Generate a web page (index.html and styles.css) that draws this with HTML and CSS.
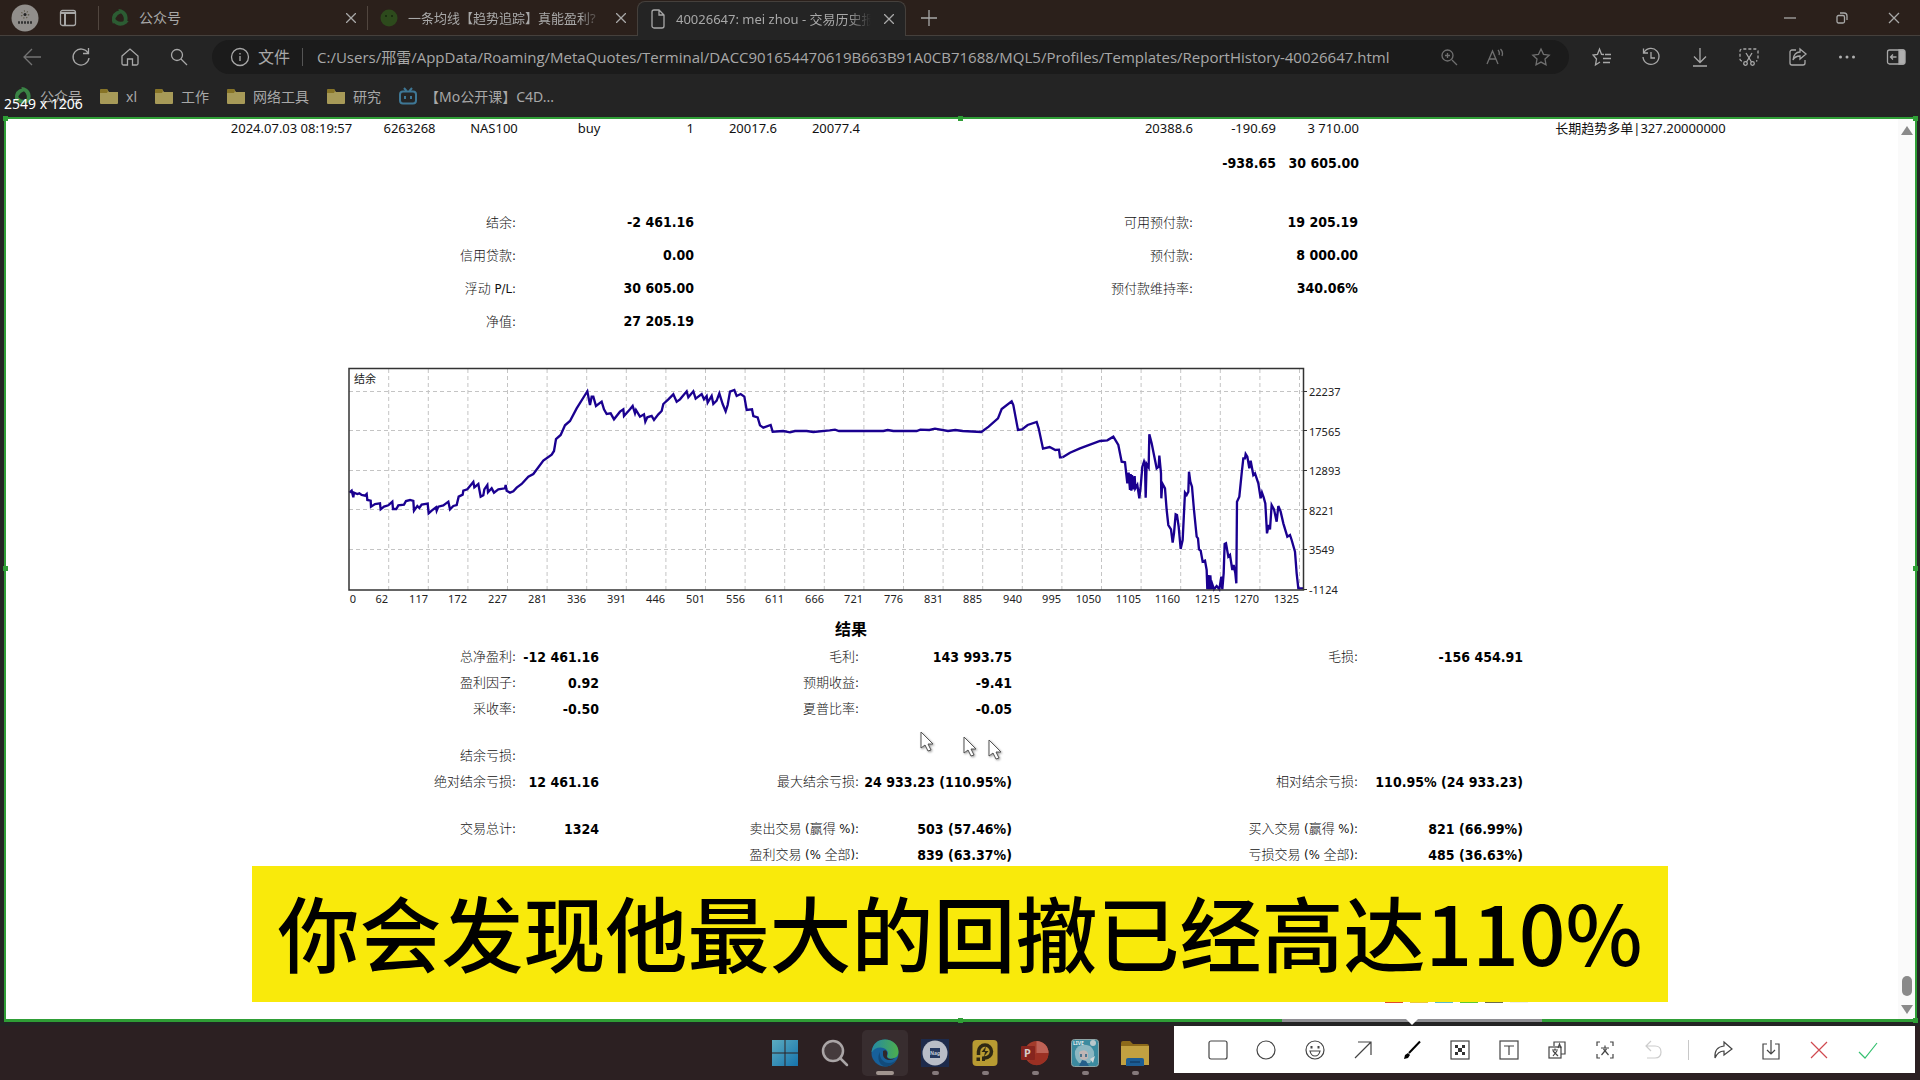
FILE: index.html
```html
<!DOCTYPE html>
<html lang="zh-CN">
    <head>
        <meta charset="utf-8" />
        <title>40026647: mei zhou - 交易历史报告</title>
        <link rel="stylesheet" href="styles.css">
    </head>

    <body>
        <header class="browser">
            <div class="tabstrip">
                <button class="avatar" aria-label="profile">
                    <svg width="28" height="28" viewBox="0 0 28 28"><circle cx="14" cy="14" r="13.500" fill="#918e8b"/><circle cx="14" cy="10.500" r="3.500" fill="none" stroke="#5a5645" stroke-width="1.500" stroke-dasharray="1 2"/><circle cx="14" cy="10.500" r="1.500" fill="#222"/><path d="M7 18.500h14" stroke="#333" stroke-width="2.500" stroke-dasharray="2 1"/></svg>
                </button>
                <button class="workspace" aria-label="tab actions">
                    <svg width="18" height="18" viewBox="0 0 18 18" class="line"><rect x="1.500" y="1.500" width="15" height="15" rx="2"/><path d="M2 4h14M6 5v11" stroke-width="2"/></svg>
                </button>
                <div class="tab first">
                    <svg width="18" height="18" viewBox="0 0 18 18" fill="#2c5c33"><g id="swirl"><path d="M1 12Q0 3 9 1L13 4Q5 4 4 12L2 15z"/><path d="M1 12Q0 3 9 1L13 4Q5 4 4 12L2 15z" transform="rotate(120 9 9)"/><path d="M1 12Q0 3 9 1L13 4Q5 4 4 12L2 15z" transform="rotate(240 9 9)"/></g></svg>
                    <span>公众号</span>
                    <button class="close" aria-label="close tab"><svg width="10" height="10" viewBox="0 0 10 10" class="line"><path d="M0 0l10 10M10 0L0 10"/></svg></button>
                </div>
                <div class="tab second">
                    <svg width="18" height="18" viewBox="0 0 18 18"><circle cx="9" cy="9" r="8.500" fill="#2d4a1c"/><circle cx="6" cy="7" r="1" fill="#15260d"/><circle cx="12" cy="7" r="1" fill="#15260d"/></svg>
                    <span class="fade">一条均线【趋势追踪】真能盈利?</span>
                    <button class="close" aria-label="close tab"><svg width="10" height="10" viewBox="0 0 10 10" class="line"><path d="M0 0l10 10M10 0L0 10"/></svg></button>
                </div>
                <div class="tab active">
                    <svg width="16" height="20" viewBox="0 0 16 20" class="line"><path d="M2 3a2 2 0 0 1 2-2h5l5 5v11a2 2 0 0 1-2 2H4a2 2 0 0 1-2-2zM9 1v5h5"/></svg>
                    <span class="fade">40026647: mei zhou - 交易历史报</span>
                    <button class="close" aria-label="close tab"><svg width="10" height="10" viewBox="0 0 10 10" class="line"><path d="M0 0l10 10M10 0L0 10"/></svg></button>
                </div>
                <button class="newtab" aria-label="new tab"><svg width="16" height="16" viewBox="0 0 16 16" class="line"><path d="M8 0v16M0 8h16"/></svg></button>
                <div class="window-buttons">
                    <button aria-label="minimize"><svg width="12" height="12" viewBox="0 0 12 12" class="line"><path d="M0 6h12"/></svg></button>
                    <button aria-label="restore"><svg width="12" height="12" viewBox="0 0 12 12" class="line"><rect x="1" y="3.500" width="7.500" height="7.500" rx="1.500"/><path d="M4 1h4a3 3 0 0 1 3 3v4"/></svg></button>
                    <button aria-label="close"><svg width="12" height="12" viewBox="0 0 12 12" class="line"><path d="M1 1l10 10M11 1L1 11"/></svg></button>
                </div>
            </div>

            <div class="toolbar">
                <button class="dim" aria-label="back"><svg width="20" height="20" viewBox="0 0 20 20" class="line"><path d="M19 10H2M10 2l-8 8 8 8"/></svg></button>
                <button aria-label="reload"><svg width="20" height="20" viewBox="0 0 20 20" class="line"><path d="M17 6a8 8 0 1 0 1 5M17.500 1v5.500H12"/></svg></button>
                <button aria-label="home"><svg width="20" height="20" viewBox="0 0 20 20" class="line"><path d="M2 9l8-7 8 7v7.500a1.500 1.500 0 0 1-1.500 1.500H12.500v-6h-5v6H3.500A1.500 1.500 0 0 1 2 16.500z"/></svg></button>
                <button aria-label="search"><svg width="20" height="20" viewBox="0 0 20 20" class="line"><circle cx="8" cy="8" r="5.500"/><path d="M12 12l6 6"/></svg></button>
                <div class="address">
                    <svg width="20" height="20" viewBox="0 0 20 20" class="line"><circle cx="10" cy="10" r="8.500"/><path d="M10 9v5M10 6v1.500"/></svg>
                    <label for="url">文件</label>
                    <input id="url" type="text" value="C:/Users/邢雷/AppData/Roaming/MetaQuotes/Terminal/DACC901654470619B663B91A0CB71688/MQL5/Profiles/Templates/ReportHistory-40026647.html">
                    <button class="dim" aria-label="zoom"><svg width="18" height="18" viewBox="0 0 18 18" class="line"><circle cx="7.500" cy="7.500" r="5.500"/><path d="M12 12l5 5M7.500 5v5M5 7.500h5"/></svg></button>
                    <button class="dim" aria-label="read aloud"><svg width="18" height="18" viewBox="0 0 18 18" class="line"><path d="M1 16L6.500 3 12 16M3 11h7M12 2q2 2 1 5M14.500 1q3 3 1.500 7"/></svg></button>
                    <button class="dim" aria-label="favorite"><svg width="20" height="20" viewBox="0 0 20 20" class="line"><path d="M10 2l2.500 5.300 5.700.8-4.200 4 1 5.700-5-2.700-5 2.700 1-5.700-4.200-4 5.700-.8z"/></svg></button>
                </div>
                <button aria-label="favorites"><svg width="20" height="20" viewBox="0 0 20 20" class="line"><path d="M12 7.500L9.500 7.300 7.500 2 5.500 7.300 1 8l3.500 4-1 6L8 15M13 7.500h6M11 11.500h8M11 15.500h7"/></svg></button>
                <button aria-label="history"><svg width="20" height="20" viewBox="0 0 20 20" class="line"><path d="M3 5.500A8 8 0 1 1 2 10M2.500 1.500v4.500H7M10 5v6h4"/></svg></button>
                <button aria-label="downloads"><svg width="20" height="20" viewBox="0 0 20 20" class="line"><path d="M10 1v14M4 9.500l6 6 6-6M3 19h14"/></svg></button>
                <button aria-label="web capture"><svg width="20" height="20" viewBox="0 0 20 20" class="line"><path d="M3 14a2 2 0 0 1-2-2V4a2 2 0 0 1 2-2h14a2 2 0 0 1 2 2v8a2 2 0 0 1-2 2" stroke-dasharray="3 2"/><path d="M7 6l5.500 9M13 6l-5.500 9"/><circle cx="6.500" cy="16.500" r="1.800"/><circle cx="13.500" cy="16.500" r="1.800"/></svg></button>
                <button aria-label="share"><svg width="20" height="20" viewBox="0 0 20 20" class="line"><path d="M8 3H4a2 2 0 0 0-2 2v11a2 2 0 0 0 2 2h11a2 2 0 0 0 2-2v-3M12 2l6 5-6 5V9q-5 0-7 4 1-8 7-8z"/></svg></button>
                <button aria-label="more"><svg width="20" height="20" viewBox="0 0 20 20" fill="#b0b0b0"><circle cx="3.500" cy="10" r="1.500"/><circle cx="10" cy="10" r="1.500"/><circle cx="16.500" cy="10" r="1.500"/></svg></button>
                <button aria-label="sidebar"><svg width="20" height="20" viewBox="0 0 20 20" class="line"><rect x="1.500" y="3" width="17" height="14" rx="2"/><path d="M13 3h4a2 2 0 0 1 2 2v10a2 2 0 0 1-2 2h-4z" fill="#b0b0b0"/><path d="M10.500 10h-6M7 7.500L4.500 10 7 12.500"/></svg></button>
            </div>

            <nav class="bookmarks">
                <a href="#"><svg width="18" height="18" viewBox="0 0 18 18" fill="#3a8445"><use href="#swirl"/></svg>公众号</a>
                <a href="#"><svg width="18" height="18" viewBox="0 0 18 18"><path d="M0 3.500A1.500 1.500 0 0 1 1.500 2H7l2 3h9v11a1 1 0 0 1-1 1H1a1 1 0 0 1-1-1z" fill="#a79a58"/><path d="M0 3.500A1.500 1.500 0 0 1 1.500 2H7l1 2-1 2H0z" fill="#877426"/></svg>xl</a>
                <a href="#"><svg width="18" height="18" viewBox="0 0 18 18"><path d="M0 3.500A1.500 1.500 0 0 1 1.500 2H7l2 3h9v11a1 1 0 0 1-1 1H1a1 1 0 0 1-1-1z" fill="#a79a58"/><path d="M0 3.500A1.500 1.500 0 0 1 1.500 2H7l1 2-1 2H0z" fill="#877426"/></svg>工作</a>
                <a href="#"><svg width="18" height="18" viewBox="0 0 18 18"><path d="M0 3.500A1.500 1.500 0 0 1 1.500 2H7l2 3h9v11a1 1 0 0 1-1 1H1a1 1 0 0 1-1-1z" fill="#a79a58"/><path d="M0 3.500A1.500 1.500 0 0 1 1.500 2H7l1 2-1 2H0z" fill="#877426"/></svg>网络工具</a>
                <a href="#"><svg width="18" height="18" viewBox="0 0 18 18"><path d="M0 3.500A1.500 1.500 0 0 1 1.500 2H7l2 3h9v11a1 1 0 0 1-1 1H1a1 1 0 0 1-1-1z" fill="#a79a58"/><path d="M0 3.500A1.500 1.500 0 0 1 1.500 2H7l1 2-1 2H0z" fill="#877426"/></svg>研究</a>
                <a href="#"><svg width="18" height="18" viewBox="0 0 18 18" fill="none" stroke="#3e7795" stroke-width="2"><rect x="1" y="4.500" width="16" height="12" rx="3"/><path d="M5 1l2.500 3M13 1l-2.500 3M6 9v3M12 9v3"/></svg>【Mo公开课】C4D...</a>
            </nav>
            <div class="size-tip">2549 x 1206</div>
        </header>

        <div class="capture">
            <main class="report">
                <table class="deals">
                    <colgroup><col class="w144"><col class="w92"><col class="w77"><col class="w113"><col class="w50"><col class="w83"><col class="w83"><col class="w250"><col class="w83"><col class="w83"><col class="w83"><col class="w160"><col></colgroup>
                    <tr>
                        <td>2024.07.03 08:19:57</td><td>6263268</td><td>NAS100</td><td>buy</td>
                        <td class="num">1</td><td class="num">20017.6</td><td class="num">20077.4</td><td></td>
                        <td class="num">20388.6</td><td class="num">-190.69</td><td class="num">3 710.00</td><td></td>
                        <td>长期趋势多单|327.20000000</td>
                    </tr>
                    <tr class="totals">
                        <td colspan="9"></td><td class="num"><b>-938.65</b></td><td class="num"><b>30 605.00</b></td><td colspan="2"></td>
                    </tr>
                </table>

                <table class="balance">
                    <colgroup><col class="w298"><col class="w178"><col class="w499"><col class="w165"><col></colgroup>
                    <tr><td>结余:</td><td><b>-2 461.16</b></td><td>可用预付款:</td><td><b>19 205.19</b></td><td></td></tr>
                    <tr><td>信用贷款:</td><td><b>0.00</b></td><td>预付款:</td><td><b>8 000.00</b></td><td></td></tr>
                    <tr><td>浮动 P/L:</td><td><b>30 605.00</b></td><td>预付款维持率:</td><td><b>340.06%</b></td><td></td></tr>
                    <tr><td>净值:</td><td><b>27 205.19</b></td><td></td><td></td><td></td></tr>
                </table>

                <svg class="chart" width="1010" height="248" viewBox="340 362 1010 248">
                    <!-- grid -->
                    <path class="grid" d="M349 391.500H1303M349 430.500H1303M349 470.500H1303M349 509.500H1303M349 549.500H1303"/>
                    <path class="grid" d="M388.700 369v221M428.300 369v221M467.900 369v221M507.500 369v221M547.100 369v221M586.700 369v221M626.300 369v221M665.900 369v221M705.500 369v221M745.100 369v221M784.700 369v221M824.300 369v221M863.900 369v221M903.500 369v221M943.100 369v221M982.700 369v221M1022.300 369v221M1061.900 369v221M1101.500 369v221M1141.100 369v221M1180.700 369v221M1220.300 369v221M1259.900 369v221M1299.500 369v221"/>
                    <!-- balance curve -->
                    <g class="curve" transform="translate(330 350) scale(.33333)">
                        <polyline points="58,428 65,422 70,442 72,428 82,432 88,430 95,435 105,437 110,432 112,450 122,452 123,470 135,462 150,460 152,478 162,470 175,466 187,455 189,477 199,477 205,466 222,464 228,453 240,450 250,453 252,482 262,468 268,474 275,464 293,461 296,490 305,482 318,472 320,482 325,470 340,466 355,455 360,478 370,468 380,465 386,440 398,434 400,422 412,418 430,396 433,412 445,402 452,440 460,436 463,418 472,405 474,427 485,415 492,428 505,418 525,415 527,405 530,422 540,428 550,424 560,413 575,402 595,380 610,372 640,332 665,314 672,303 678,267 692,255 705,226 720,213 740,175 765,135 772,124 780,165 785,140 790,140 798,168 815,155 822,178 830,192 842,190 852,208 870,185 880,178 882,198 900,178 908,168 915,190 918,180 930,200 942,193 946,215 952,202 965,198 972,210 985,193 995,183 1000,162 1015,148 1030,133 1040,155 1050,148 1070,124 1075,142 1090,124 1097,146 1115,132 1122,148 1130,138 1133,158 1145,138 1150,162 1160,152 1168,130 1178,162 1187,184 1193,165 1200,125 1213,120 1220,138 1232,132 1243,140 1250,180 1266,178 1270,198 1283,202 1290,226 1300,233 1322,225 1328,245 1360,243 1380,247 1395,243 1430,243 1450,246 1499,241 1515,239 1527,243 1660,243 1673,240 1690,243 1760,243 1771,239 1798,240 1815,236 1854,243 1876,240 1898,243 1954,246 1976,230 2004,205 2015,177 2045,154 2050,165 2064,240 2076,238 2093,225 2120,216 2126,235 2139,296 2159,291 2176,300 2187,299 2190,322 2198,322"/>
                        <polyline transform="translate(2160 -30)" points="38,352 60,338 90,325 150,303 172,301 190,290 205,315 215,365 225,367 232,430 236,398 240,450 242,402 244,452 246,405 250,448 254,408 256,445 262,435 268,475 272,440 277,380 282,365 285,375 287,473 290,372 296,382 298,283 305,310 312,345 320,385 326,380 328,347 333,400 334,475 337,430 345,445 350,510 355,555 363,568 368,608 372,580 377,523 381,525 386,560 392,627 398,600 405,458 410,465 415,455 417,395 421,425 426,440 432,510 440,590 444,595 447,628 452,632 458,665 465,662 470,690 472,748 475,705 478,748 481,706 484,748 487,733 492,748 500,738 508,748 514,710 517,748 521,700 524,612 528,610 535,650 540,645 547,690 551,675 556,700 559,730 561,485 568,470 575,400 580,355 585,355 587,342 592,350 598,385 602,362 610,405 615,400 625,430 632,475 636,458 641,472 646,490 651,580 656,555 660,568 665,495 672,508 680,545 685,498 692,515 700,550 712,590 720,585 725,600 735,635 740,700 745,745 760,745"/>
                    </g>
                    <rect class="plot" x="349" y="368.500" width="954.500" height="221.500"/>
                    <path class="ticks" d="M1303 391.500h4M1303 430.500h4M1303 470.500h4M1303 509.500h4M1303 549.500h4M1303 589.500h4"/>
                    <text x="354" y="383">结余</text>
                    <g class="xaxis">
                        <text x="356" y="603">0</text><text x="388" y="603">62</text><text x="428" y="603">117</text><text x="467" y="603">172</text><text x="507" y="603">227</text><text x="547" y="603">281</text><text x="586" y="603">336</text><text x="626" y="603">391</text><text x="665" y="603">446</text><text x="705" y="603">501</text><text x="745" y="603">556</text><text x="784" y="603">611</text><text x="824" y="603">666</text><text x="863" y="603">721</text><text x="903" y="603">776</text><text x="943" y="603">831</text><text x="982" y="603">885</text><text x="1022" y="603">940</text><text x="1061" y="603">995</text><text x="1101" y="603">1050</text><text x="1141" y="603">1105</text><text x="1180" y="603">1160</text><text x="1220" y="603">1215</text><text x="1259" y="603">1270</text><text x="1299" y="603">1325</text>
                    </g>
                    <text x="1309" y="396">22237</text><text x="1309" y="436">17565</text><text x="1309" y="475">12893</text><text x="1309" y="515">8221</text><text x="1309" y="554">3549</text><text x="1309" y="594">-1124</text>
                </svg>

                <table class="results">
                    <caption>结果</caption>
                    <colgroup><col class="w298"><col class="w83"><col class="w260"><col class="w153"><col class="w346"><col class="w165"><col></colgroup>
                    <tr><td>总净盈利:</td><td><b>-12 461.16</b></td><td>毛利:</td><td><b>143 993.75</b></td><td>毛损:</td><td><b>-156 454.91</b></td><td></td></tr>
                    <tr><td>盈利因子:</td><td><b>0.92</b></td><td>预期收益:</td><td><b>-9.41</b></td><td></td><td></td><td></td></tr>
                    <tr><td>采收率:</td><td><b>-0.50</b></td><td>夏普比率:</td><td><b>-0.05</b></td><td></td><td></td><td></td></tr>
                    <tr class="spacer"><td colspan="7"></td></tr>
                    <tr><td>结余亏损:</td><td></td><td></td><td></td><td></td><td></td><td></td></tr>
                    <tr><td>绝对结余亏损:</td><td><b>12 461.16</b></td><td>最大结余亏损:</td><td><b>24 933.23 (110.95%)</b></td><td>相对结余亏损:</td><td><b>110.95% (24 933.23)</b></td><td></td></tr>
                    <tr class="spacer"><td colspan="7"></td></tr>
                    <tr><td>交易总计:</td><td><b>1324</b></td><td>卖出交易 (赢得 %):</td><td><b>503 (57.46%)</b></td><td>买入交易 (赢得 %):</td><td><b>821 (66.99%)</b></td><td></td></tr>
                    <tr><td></td><td></td><td>盈利交易 (% 全部):</td><td><b>839 (63.37%)</b></td><td>亏损交易 (% 全部):</td><td><b>485 (36.63%)</b></td><td></td></tr>
                </table>
            </main>
            <div class="scrollbar">
                <i class="up"></i>
                <i class="thumb"></i>
                <i class="down"></i>
            </div>
            <i class="handle tl"></i><i class="handle tc"></i><i class="handle tr"></i>
            <i class="handle ml"></i><i class="handle mr"></i>
            <i class="handle bc"></i><i class="handle br"></i>
            <div class="palette"><i class="red"></i><i class="yellow"></i><i class="blue"></i><i class="green"></i><i class="dark"></i><i class="light"></i></div>
        </div>

        <footer class="taskbar">
            <div class="apps">
                <button aria-label="start"><svg width="28" height="28" viewBox="0 0 28 28"><defs><linearGradient id="win" x1="0" y1="0" x2="1" y2="1"><stop offset="0" stop-color="#5cacc0"/><stop offset="1" stop-color="#1673ac"/></linearGradient></defs><path d="M1 1h12.500v12.500H1zM14.500 1H27v12.500H14.500zM1 14.500h12.500V27H1zM14.500 14.500H27V27H14.500z" fill="url(#win)"/></svg></button>
                <button aria-label="search"><svg width="28" height="28" viewBox="0 0 28 28" fill="#453b3d" stroke="#aaa5a6" stroke-width="2.500"><circle cx="12" cy="12" r="10"/><path d="M19 19l7 7" stroke-linecap="round"/></svg></button>
                <button class="current" aria-label="edge"><svg width="28" height="28" viewBox="0 0 28 28"><defs><linearGradient id="edge"><stop offset="0" stop-color="#2489a5"/><stop offset="1" stop-color="#4dae4c"/></linearGradient></defs><circle cx="14" cy="14" r="13.500" fill="#17609a"/><path d="M.5 13C2 4 7 .5 14 .5c8 0 13.500 6 13.500 12 0 5-3 7-7 7-3 0-5-1-4-3 2-4-2-8-7-8-4 0-7 2-8.500 4.500z" fill="url(#edge)"/><path d="M9 13c-1 6 3 11 9 11 3 0 5-1 7-3-3 5-7 6.500-11 6.500-5-1-9-8-5-14.500z" fill="#124b7a"/><path d="M12 12c3-2 5 1 4 4-1 4 4 5 8 3-3 3-11 3-12-3z" fill="#30272a"/></svg></button>
                <button class="open" aria-label="nag"><svg width="28" height="28" viewBox="0 0 28 28"><path fill="#1d2a4b" d="M0 0h28v28H0z"/><circle cx="14" cy="14" r="12.500" fill="#b9bdc7"/><path fill="#26385f" d="M9 9h10v10H9z"/><text x="9" y="16" font-size="5" fill="#c2c8d4" font-weight="bold">Nag</text></svg></button>
                <button class="open" aria-label="potplayer"><svg width="28" height="28" viewBox="0 0 28 28"><rect x="1.500" y="1" width="25" height="26" rx="4" fill="#b89b32"/><path d="M7.500 16V12.500a6.500 6.500 0 1 1 6.500 6.500h-1.500" fill="none" stroke="#2e2814" stroke-width="3.500"/><path d="M5.500 18.500h3.500v3.500H5.500zM11 17.500h3v4.500h-3z" fill="#2e2814"/><path d="M15 7.500l-4.500 5.500h3.500l-1 4.500 4.500-5.500h-3.500z" fill="#2e2814"/></svg></button>
                <button class="open" aria-label="powerpoint"><svg width="28" height="28" viewBox="0 0 28 28"><circle cx="15.500" cy="14" r="12" fill="#a33b2b"/><path d="M15.500 2a12 12 0 0 1 12 12h-12z" fill="#bd6256"/><path d="M15.500 14h12a12 12 0 0 1-20 9z" fill="#9b3023"/><rect x="0" y="7" width="14" height="14" rx="1" fill="#86251e"/><text x="3" y="18" font-size="11" font-weight="bold" fill="#d7cdca">P</text></svg></button>
                <button class="open" aria-label="live"><svg width="28" height="28" viewBox="0 0 28 28"><rect x=".5" y=".5" width="27" height="27" rx="3" fill="#3b8a9f" stroke="#8fa4a6"/><path d="M4 12q4-9 15-5 5 4 4 10l-4 7H8q-5-5-4-12z" fill="#8cb7c2"/><path d="M8 13q6-4 9 1v5q-4 4-8 0z" fill="#c0b5b5"/><path d="M10 15v3M15 15v3" stroke="#255f80" stroke-width="1.500"/><path d="M8 27l3-6 4 1 3 5z" fill="#245f8b"/><circle cx="22" cy="4" r="3" fill="#b8c7cc"/><path d="M19 20l5-3-2 7z" fill="#d0d7d8"/><text x="2" y="6" font-size="5" font-weight="bold" fill="#e0eaec">LIVE</text></svg></button>
                <button class="open" aria-label="explorer"><svg width="28" height="28" viewBox="0 0 28 28"><path d="M0 4a2 2 0 0 1 2-2h7l3 3h14a2 2 0 0 1 2 2v19H0z" fill="#8c6a1b"/><path d="M0 7h28v19H0z" fill="#c2a141"/><path d="M5 27v-6a2 2 0 0 1 2-2h14a2 2 0 0 1 2 2v6z" fill="#1c5d94"/><path d="M9 23h10" stroke="#123f6a" stroke-width="1.500"/></svg></button>
            </div>
            <div class="snip">
                <button aria-label="rectangle"><svg width="20" height="20" viewBox="0 0 20 20"><rect x="1" y="1" width="18" height="18" rx="2"/></svg></button>
                <button aria-label="ellipse"><svg width="20" height="20" viewBox="0 0 20 20"><circle cx="10" cy="10" r="9"/></svg></button>
                <button aria-label="emoji"><svg width="20" height="20" viewBox="0 0 20 20"><circle cx="10" cy="10" r="9"/><path d="M5 11h10q-1 5-5 5t-5-5z"/><path d="M6.500 6v2.500M13.500 6v2.500" stroke-width="2"/></svg></button>
                <button aria-label="arrow"><svg width="20" height="20" viewBox="0 0 20 20"><path d="M2 18L18 2M5 2h13v13"/></svg></button>
                <button class="selected" aria-label="brush"><svg width="20" height="20" viewBox="0 0 20 20"><path d="M7 13L18 1.500" stroke="#000" stroke-width="2"/><path d="M2 19l1-4 3-2 2 2-2 3z" fill="#000" stroke="none"/></svg></button>
                <button aria-label="mosaic"><svg width="20" height="20" viewBox="0 0 20 20"><rect x="1" y="1" width="18" height="18"/><path d="M5 5h3v3H5zM12 5h3v3h-3zM8 8h4v4H8zM5 12h3v3H5zM12 12h3v3h-3z" fill="#333" stroke="none"/></svg></button>
                <button aria-label="text"><svg width="20" height="20" viewBox="0 0 20 20"><rect x="1" y="1" width="18" height="18"/><path d="M5 6h10M10 6v9"/></svg></button>
                <button aria-label="translate"><svg width="20" height="20" viewBox="0 0 20 20"><path d="M7 6V2h11v12h-4"/><rect x="2" y="7" width="12" height="11"/><path d="M5 10h6M8 8.500V10M6 16l4-5M6 11l5 5M11 8l1.500-4L14 8"/></svg></button>
                <button aria-label="recognize text"><svg width="20" height="20" viewBox="0 0 20 20"><path d="M5 2H2v4M15 2h3v4M5 18H2v-4M15 18h3v-4M6 8h8M10 5.500v2.500M6.500 15l5-6M8.500 9l5 6"/></svg></button>
                <button class="off" aria-label="undo"><svg width="20" height="20" viewBox="0 0 20 20"><path d="M7 1L2 6l5 5M2 6h9q6 0 6 6t-6 6H3"/></svg></button>
                <hr>
                <button aria-label="share"><svg width="20" height="20" viewBox="0 0 20 20"><path d="M11 2l8 7-8 6v-4q-6 0-9 7-1-11 9-12z"/></svg></button>
                <button aria-label="save"><svg width="20" height="20" viewBox="0 0 20 20"><path d="M6 4H2v15h16V4h-4M10 0v14M6 10l4 4 4-4"/></svg></button>
                <button class="cancel" aria-label="cancel"><svg width="20" height="20" viewBox="0 0 20 20"><path d="M2 2l16 16M18 2L2 18"/></svg></button>
                <button class="ok" aria-label="done"><svg width="20" height="20" viewBox="0 0 20 20"><path d="M1 12l6 6L19 3"/></svg></button>
            </div>
        </footer>

        <svg class="cursor one" width="16" height="23" viewBox="0 0 16 23"><path d="M1 1v16l4-3 3 6 3-1-3-6h5z"/></svg>
        <svg class="cursor two" width="16" height="23" viewBox="0 0 16 23"><path d="M1 1v16l4-3 3 6 3-1-3-6h5z"/></svg>
        <svg class="cursor three" width="16" height="23" viewBox="0 0 16 23"><path d="M1 1v16l4-3 3 6 3-1-3-6h5z"/></svg>

        <div class="subtitle">你会发现他最大的回撤已经高达110%</div>
    </body>
</html>
```

FILE: styles.css
```css
* {
    box-sizing: border-box;
}
html, body {
    margin: 0;
    padding: 0;
    height: 100%;
    overflow: hidden;
}
body {
    position: relative;
    display: flex;
    flex-direction: column;
    background: #242424;
    font-family: "Noto Sans", "Noto Sans CJK SC", sans-serif;
}
button {
    display: flex;
    align-items: center;
    justify-content: center;
    padding: 0;
    border: 0;
    background: none;
    color: inherit;
    font: inherit;
}
svg {
    flex: none;
}
.line {
    fill: none;
    stroke: #a8a8a8;
    stroke-width: 1.3;
}
.dim {
    opacity: 0.6;
}

/* browser top */
.browser {
    position: relative;
    flex: none;
    height: 117px;
    color: #a8a8a8;
    font-size: 14px;
}
.tabstrip {
    display: flex;
    align-items: center;
    height: 36px;
    background: #2b201b;
    border-bottom: 1px solid #45403c;
}
.avatar {
    width: 50px;
}
.workspace {
    width: 36px;
}
.tab {
    display: flex;
    align-items: center;
    height: 24px;
    gap: 10px;
    padding: 0 8px 0 12px;
    border-left: 1px solid #51463f;
}
.tab span {
    flex: 1;
    overflow: hidden;
    white-space: nowrap;
    line-height: 20px;
}
.tab .fade {
    font-size: 13px;
    mask-image: linear-gradient(to right, #000 88%, transparent);
}
.first {
    width: 269px;
    margin-left: 12px;
}
.second {
    width: 270px;
    padding-right: 8px;
}
.active {
    align-self: flex-end;
    width: 269px;
    height: 35px;
    margin-bottom: -1px;
    background: #242424;
    border: 1px solid #45403c;
    border-bottom: 0;
    border-radius: 8px 8px 0 0;
}
.close {
    width: 16px;
}
.newtab {
    width: 46px;
}
.window-buttons {
    display: flex;
    margin-left: auto;
}
.window-buttons button {
    width: 52px;
}
.toolbar {
    display: flex;
    align-items: center;
    height: 41px;
    padding: 0 0 0 7px;
}
.toolbar > button {
    width: 49px;
}
.address {
    flex: 1;
    display: flex;
    align-items: center;
    height: 34px;
    margin: 0 8px 0 9px;
    padding: 0 5px 0 18px;
    background: #1b1b1b;
    border-radius: 17px;
}
.address label {
    margin: 0 14px 0 8px;
    padding-right: 12px;
    border-right: 1px solid #555;
    font-size: 16px;
    line-height: 18px;
}
.address input {
    flex: 1;
    min-width: 0;
    padding: 0;
    border: 0;
    outline: 0;
    background: none;
    color: #a8a8a8;
    font: 15px "Open Sans", "Noto Sans CJK SC", sans-serif;
}
.address button {
    width: 46px;
}
.bookmarks {
    display: flex;
    align-items: center;
    gap: 18px;
    height: 38px;
    padding-left: 14px;
}
.bookmarks a {
    display: flex;
    align-items: center;
    gap: 8px;
    color: #a8a8a8;
    text-decoration: none;
}
.size-tip {
    position: absolute;
    left: 4px;
    top: 94px;
    color: #fff;
    font-size: 14px;
    line-height: 20px;
}

/* captured page */
.capture {
    position: relative;
    flex: 1;
    display: flex;
    min-height: 0;
    margin: 0 3px 0 4px;
    border: 2px solid #2f9e36;
    border-bottom-width: 3px;
    background: #fff;
}
.report {
    flex: 1;
    min-width: 0;
    overflow: hidden;
    padding: 0 136px 0 215px;
    color: #000;
}
table {
    width: 100%;
    table-layout: fixed;
    border-collapse: collapse;
    font-size: 13px;
}
td {
    height: 18px;
    padding: 0 3px 0 0;
    color: #111;
    line-height: 18px;
    text-align: center;
    white-space: nowrap;
}
td b {
    color: #000;
    font-family: "DejaVu Sans Condensed", "Noto Sans", sans-serif;
    font-size: 14px;
    font-weight: 700;
}
.num, .balance td, .results td {
    text-align: right;
}
.totals td {
    height: 52px;
}
.balance {
    margin-top: 17px;
}
.balance td {
    height: 33px;
}
.balance td, .results td {
    font-family: "DejaVu Sans Condensed", "Noto Sans CJK SC", sans-serif;
    font-weight: 300;
}
.results caption {
    height: 34px;
    padding: 2px 281px 0 0;
    font-size: 16px;
    font-weight: bold;
    line-height: 34px;
}
.results td {
    height: 26px;
}
.results .spacer td {
    height: 21px;
}
.w50 { width: 50px; }
.w77 { width: 77px; }
.w83 { width: 83px; }
.w92 { width: 92px; }
.w113 { width: 113px; }
.w144 { width: 144px; }
.w153 { width: 153px; }
.w160 { width: 160px; }
.w165 { width: 165px; }
.w178 { width: 178px; }
.w250 { width: 250px; }
.w260 { width: 260px; }
.w298 { width: 298px; }
.w346 { width: 346px; }
.w499 { width: 499px; }

.chart {
    display: block;
    margin: 24px 0 0 119px;
    font-size: 11px;
    fill: #222;
}
.grid {
    fill: none;
    stroke: #c4c4c4;
    stroke-dasharray: 4 3;
}
.curve {
    fill: none;
    stroke: #1a0090;
    stroke-width: 7;
}
.plot {
    fill: none;
    stroke: #333;
    stroke-width: 1.5;
}
.ticks {
    stroke: #333;
}
.xaxis text {
    text-anchor: end;
}

.scrollbar {
    display: flex;
    flex-direction: column;
    align-items: center;
    width: 17px;
    padding: 7px 0 5px;
    background: #fafafa;
}
.up, .down {
    border: 6px solid transparent;
}
.up {
    border-top: 0;
    border-bottom: 9px solid #8a8a8a;
}
.down {
    border-bottom: 0;
    border-top: 9px solid #8a8a8a;
}
.thumb {
    width: 10px;
    height: 20px;
    margin: auto 0 9px;
    border-radius: 5px;
    background: #8a8a8a;
}
.handle {
    position: absolute;
    width: 5px;
    height: 5px;
    background: #2f9e36;
}
.tl { left: -3px; top: -3px; }
.tc { left: calc(50% - 3px); top: -3px; }
.tr { right: -3px; top: -3px; }
.ml { left: -3px; top: calc(50% - 3px); }
.mr { right: -3px; top: calc(50% - 3px); }
.bc { left: calc(50% - 3px); bottom: -4px; }
.br { right: -3px; bottom: -4px; }
.palette {
    position: absolute;
    right: 373px;
    bottom: -3px;
    display: flex;
    gap: 7px;
    width: 260px;
    height: 21px;
    padding-left: 103px;
    border-bottom: 3px solid #8e8e92;
}
.palette i {
    width: 18px;
    height: 2px;
}
.red { background: #e04a2c; }
.yellow { background: #ecc93a; }
.blue { background: #5cb8c8; }
.green { background: #5cc832; }
.dark { background: #6b6b4c; }
.light { background: #eeeeee; }

/* taskbar */
.taskbar {
    flex: none;
    display: flex;
    justify-content: flex-end;
    align-items: flex-start;
    height: 54px;
    margin-top: 4px;
    padding-right: 5px;
    background: #2c2022;
}
.apps {
    display: flex;
    gap: 4px;
    margin-right: 16px;
    padding-top: 4px;
}
.apps button {
    position: relative;
    width: 46px;
    height: 46px;
    border-radius: 5px;
}
.apps .current {
    background: #382d2f;
}
.current::after, .open::after {
    content: "";
    position: absolute;
    bottom: 1px;
    width: 7px;
    height: 4px;
    border-radius: 2px;
    background: #85797b;
}
.current::after {
    width: 18px;
    background: #a1958f;
}
.snip {
    display: flex;
    align-items: center;
    justify-content: space-between;
    width: 741px;
    height: 47px;
    padding: 0 37px 0 34px;
    background: #fff;
}
.snip button {
    position: relative;
    width: 20px;
    height: 20px;
}
.snip svg {
    fill: none;
    stroke: #444;
    stroke-width: 1.2;
}
.snip hr {
    width: 1px;
    height: 20px;
    margin: 0 -5px 0 -4px;
    border: 0;
    background: #c8c8c8;
}
.snip .off svg { stroke: #ccc; }
.snip .cancel svg { stroke: #d04a50; }
.snip .ok svg { stroke: #35c070; }
.selected::before {
    content: "";
    position: absolute;
    top: -21px;
    left: 4px;
    border: 6px solid transparent;
    border-top-color: #fff;
    border-bottom: 0;
}

.cursor {
    position: absolute;
    fill: #fff;
    stroke: #555;
    filter: drop-shadow(1px 1px 1px #999);
}
.one { left: 920px; top: 731px; }
.two { left: 963px; top: 736px; }
.three { left: 988px; top: 739px; }

.subtitle {
    position: absolute;
    left: 50%;
    bottom: 78px;
    width: 1416px;
    height: 136px;
    transform: translateX(-50%);
    background: #f9ea0b;
    color: #000;
    font: 500 82px "Noto Sans CJK SC", sans-serif;
    line-height: 130px;
    text-align: center;
    white-space: nowrap;
}
```
